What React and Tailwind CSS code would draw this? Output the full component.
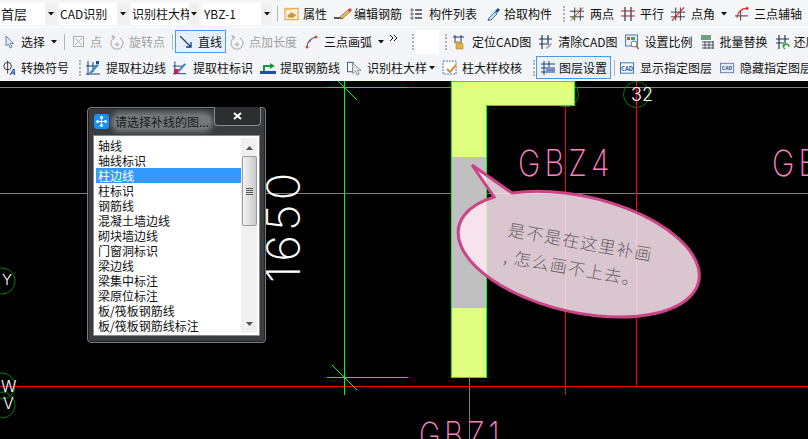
import React from "react";

const listItems = [
  "轴线", "轴线标识", "柱边线", "柱标识", "钢筋线", "混凝土墙边线", "砌块墙边线",
  "门窗洞标识", "梁边线", "梁集中标注", "梁原位标注", "板/筏板钢筋线", "板/筏板钢筋线标注",
];

function Tool({ icon, label, className = "", disabled }) {
  return (
    <div className={`flex items-center shrink-0 whitespace-nowrap ${disabled ? "text-[#a0a0a0]" : "text-[#111]"} ${className}`}>
      {icon}
      <span>{label}</span>
    </div>
  );
}

function Select({ label, textW, arrowW, className = "" }) {
  return (
    <div className={`flex h-[22px] shrink-0 ${className}`}>
      <div className={`${textW} bg-white overflow-hidden whitespace-nowrap leading-[22px] pl-[1px] text-[#111]`}>{label}</div>
      <div className={`${arrowW} bg-[#f0f0f0] flex items-center justify-center`}>
        <Caret />
      </div>
    </div>
  );
}

const Caret = ({ className = "" }) => (
  <svg viewBox="0 0 6 4" className={`w-[6px] h-[4px] shrink-0 ${className}`}><path d="M0 0h6L3 3.5z" fill="#111" /></svg>
);
const Sep = ({ className = "" }) => <div className={`w-px h-[16px] bg-[#b4b8bc] shrink-0 ${className}`} />;
const Grip = ({ className = "" }) => <div className={`w-[2px] h-[16px] border-l-2 border-dotted border-[#b0b0b0] shrink-0 ${className}`} />;

const Svg = ({ w, children }) => (
  <svg viewBox="0 0 16 16" className={`${w} h-[16px] shrink-0`}>{children}</svg>
);

export default function App() {
  return (
    <div className="w-[808px] h-[439px] overflow-hidden flex flex-col bg-black text-[12px] font-['Noto_Sans_CJK_SC',sans-serif]">
      <div className="h-[81px] shrink-0 bg-[#fafbfc] flex flex-col">
        {/* row 1 */}
        <div className="h-[27px] flex items-center bg-[#f5f6f7] overflow-hidden">
          <Select label="首层" textW="w-[45px]" arrowW="w-[12px]" className="text-[13px]" />
          <Select label="CAD识别" textW="w-[58px]" arrowW="w-[12px]" className="ml-[2px]" />
          <Select label="识别柱大样" textW="w-[58px]" arrowW="w-[10px]" className="ml-[2px]" />
          <Select label="YBZ-1" textW="w-[58px]" arrowW="w-[11px]" className="ml-[4px]" />
          <Sep className="ml-[5px]" />
          <Tool className="ml-[6px] gap-[4px]" label="属性" icon={
            <Svg w="w-[15px]"><rect x="1" y="2" width="14" height="12" fill="#fdf2dc" stroke="#e8962e" /><path d="M3 10l5-4 5 3-3 3H5z" fill="#c89a40" /><path d="M1 2h7v2H1z" fill="#f4c27a" /></Svg>
          } />
          <Tool className="ml-[7px] gap-[2px]" label="编辑钢筋" icon={
            <svg viewBox="0 0 18 16" className="w-[18px] h-[16px] shrink-0"><path d="M0 12h9" stroke="#222" strokeWidth="1.5" /><path d="M7 10l8-7 2 2-8 7-3 1z" fill="#e8b868" stroke="#8a5a20" strokeWidth=".7" /><path d="M14 4l2-2 2 2-2 2z" fill="#c84040" /></svg>
          } />
          <Tool className="ml-[8px] gap-[7px]" label="构件列表" icon={
            <svg viewBox="0 0 12 16" className="w-[12px] h-[16px] shrink-0"><path d="M1 3h2v2H1zM1 7h2v2H1zM1 11h2v2H1z" fill="none" stroke="#556" strokeWidth=".8" /><path d="M5 4h7M5 8h7M5 12h7" stroke="#445" strokeWidth="1.4" /></svg>
          } />
          <Tool className="ml-[10px] gap-[3px]" label="拾取构件" icon={
            <svg viewBox="0 0 14 16" className="w-[14px] h-[16px] shrink-0"><path d="M2 14l-1 1 1-3 6-6 2 2-6 6z" fill="#bfe0f4" stroke="#2a6aa8" strokeWidth=".9" /><path d="M8 5l3-3 2 2-3 3z" fill="#1d4f8c" /></svg>
          } />
          <Grip className="ml-[11px]" />
          <Tool className="ml-[5px] gap-[5px]" label="两点" icon={
            <Svg w="w-[15px]"><path d="M5 1v14M11 1v14M0 5h15M0 11h15" stroke="#334" /><path d="M1 15L14 1" stroke="#e02020" /><circle cx="4" cy="12" r="1.5" fill="#5a9a20" /></Svg>
          } />
          <Tool className="ml-[6px] gap-[4px]" label="平行" icon={
            <Svg w="w-[16px]"><path d="M5 1v14M11 1v14" stroke="#334" strokeWidth="1.2" /><path d="M1 5h14M1 10h14" stroke="#a02030" strokeWidth="1.2" /></Svg>
          } />
          <Tool className="ml-[7px] gap-[5px]" label="点角" icon={
            <Svg w="w-[15px]"><path d="M5 1v14M10 1v14M0 6h15M0 11h15" stroke="#334" /><path d="M1 15L14 1" stroke="#e02020" strokeWidth="1.2" /></Svg>
          } />
          <Caret className="ml-[6px]" />
          <Tool className="ml-[8px] gap-[4px]" label="三点辅轴" icon={
            <Svg w="w-[15px]"><path d="M6 5v10M0 10h14" stroke="#334" /><path d="M2 12C3 6 7 2 13 2" fill="none" stroke="#e02020" strokeWidth="1.2" /><circle cx="13" cy="2" r="1.4" fill="#e02020" /></Svg>
          } />
        </div>
        {/* row 2 */}
        <div className="h-[27px] mt-px flex items-center bg-[#f3f5f8] overflow-hidden">
          <Tool className="ml-[5px] gap-[7px]" label="选择" icon={
            <svg viewBox="0 0 9 14" className="w-[9px] h-[14px] shrink-0"><path d="M1 1v10l2.500-2L5 13l2-1-1.500-3.500H8.500z" fill="#dfe8f5" stroke="#5a7aa8" strokeWidth=".9" /></svg>
          } />
          <Caret className="ml-[6px]" />
          <Sep className="ml-[7px]" />
          <Tool disabled className="ml-[8px] gap-[6px]" label="点" icon={
            <svg viewBox="0 0 11 11" className="w-[11px] h-[11px] shrink-0"><rect x=".5" y=".5" width="10" height="10" fill="none" stroke="#b0b0b0" /><path d="M2 2l7 7M9 2L2 9" stroke="#b8b8b8" /></svg>
          } />
          <Tool disabled className="ml-[8px] gap-[5px]" label="旋转点" icon={
            <svg viewBox="0 0 14 16" className="w-[14px] h-[16px] shrink-0"><path d="M4 4a6 6 0 1 0 6 0M7 8v5M4.500 10.500h5" fill="none" stroke="#b5b5b5" strokeWidth="1.2" /><path d="M1 1l4 1-1 4z" fill="#b5b5b5" /></svg>
          } />
          <Sep className="ml-[7px]" />
          <div className="ml-[2px] w-[51px] h-[23px] shrink-0 border border-[#4a9ae8] bg-[#e6f0fa] flex items-center pl-[4px] gap-[6px] text-[#111]">
            <svg viewBox="0 0 12 12" className="w-[12px] h-[12px] shrink-0"><path d="M0 0l11 11M11 6v5H6" fill="none" stroke="#1d3f70" strokeWidth="1.3" /></svg>
            <span>直线</span>
          </div>
          <Tool disabled className="ml-[4px] gap-[5px]" label="点加长度" icon={
            <svg viewBox="0 0 14 16" className="w-[14px] h-[16px] shrink-0"><path d="M4 4a6 6 0 1 0 6 0M7 8v5M4.500 10.500h5" fill="none" stroke="#b5b5b5" strokeWidth="1.2" /><path d="M1 1l4 1-1 4z" fill="#b5b5b5" /></svg>
          } />
          <Tool className="ml-[8px] gap-[6px]" label="三点画弧" icon={
            <svg viewBox="0 0 13 14" className="w-[13px] h-[14px] shrink-0"><path d="M2 12C2 7 6 3 11 2" fill="none" stroke="#3a70b0" strokeWidth="1.2" /><circle cx="2" cy="12" r="1.500" fill="#d84a20" /><circle cx="11" cy="2" r="1.500" fill="#d84a20" /><circle cx="5" cy="6" r="1" fill="#d84a20" /></svg>
          } />
          <Caret className="ml-[6px]" />
          <svg viewBox="0 0 8 6" className="ml-[6px] w-[8px] h-[6px] shrink-0 -mt-[8px]"><path d="M0 0l3 3-3 3M4 0l3 3-3 3" fill="none" stroke="#111" /></svg>
          <Grip className="ml-[14px]" />
          <div className="ml-[2px] w-[23px] h-[24px] bg-white shrink-0" />
          <Grip className="ml-[6px]" />
          <Tool className="ml-[6px] gap-[6px]" label="定位CAD图" icon={
            <svg viewBox="0 0 13 16" className="w-[13px] h-[16px] shrink-0"><path d="M2 1v8M8 1v8M0 3h11" stroke="#223a70" /><path d="M3 15V8l1-1 1 3 1-3 1 3 1-2 2 2v5z" fill="#e8b040" stroke="#a07020" strokeWidth=".5" /></svg>
          } />
          <Tool className="ml-[8px] gap-[6px]" label="清除CAD图" icon={
            <svg viewBox="0 0 13 16" className="w-[13px] h-[16px] shrink-0"><path d="M3 1v14M9 1v10M0 5h13M0 10h8" stroke="#223a50" strokeWidth="1.2" /><path d="M7 14l5-5 1 1-5 5z" fill="#b080b0" /></svg>
          } />
          <Tool className="ml-[7px] gap-[6px]" label="设置比例" icon={
            <svg viewBox="0 0 14 16" className="w-[14px] h-[16px] shrink-0"><rect x=".5" y="1" width="12" height="11" fill="#e8f0fa" stroke="#4a7ab0" /><path d="M2 3h3v3H2z" fill="#d05040" /><path d="M6 3h4v3H6z" fill="#50a050" /><circle cx="9" cy="10" r="3" fill="#fff" stroke="#777" /><path d="M11 12l3 3" stroke="#a07020" strokeWidth="1.500" /></svg>
          } />
          <Tool className="ml-[7px] gap-[6px]" label="批量替换" icon={
            <svg viewBox="0 0 14 16" className="w-[14px] h-[16px] shrink-0"><rect x="1" y="1" width="10" height="5" fill="#70a080" /><path d="M2 8h12M2 11h12M2 14h12M5 7v8M9 7v8M13 7v8" stroke="#456" /></svg>
          } />
          <Tool className="ml-[8px] gap-[4px]" label="还原CAD图" icon={
            <svg viewBox="0 0 14 16" className="w-[14px] h-[16px] shrink-0"><path d="M3 1v14M9 1v8M0 5h13M0 9h8" stroke="#223a50" strokeWidth="1.2" /><path d="M7 13a3 3 0 0 1 6 0M7 13l2-2M7 13l2 2" fill="none" stroke="#30a030" strokeWidth="1.300" /></svg>
          } />
        </div>
        {/* row 3 */}
        <div className="h-[25px] flex items-center bg-[#f3f5f8] overflow-hidden">
          <Tool className="ml-[2px] gap-[4px]" label="转换符号" icon={
            <Svg w="w-[15px]"><ellipse cx="6" cy="6" rx="4" ry="4" fill="none" stroke="#333" /><path d="M6 0v14" stroke="#333" /><text x="8" y="15" fontSize="9" fontWeight="700" fontStyle="italic" fill="#1d4f9c">A</text></Svg>
          } />
          <Grip className="ml-[10px]" />
          <Tool className="ml-[5px] gap-[6px]" label="提取柱边线" icon={
            <svg viewBox="0 0 14 16" className="w-[14px] h-[16px] shrink-0"><path d="M2 1v14M0 14h14M0 6h10M7 2v10" stroke="#1d3f80" /><path d="M3 13L11 4l2 1-8 9z" fill="#3a8ac0" /><path d="M10 1h3v3h-3z" fill="#1d4f7c" /></svg>
          } />
          <Tool className="ml-[7px] gap-[5px]" label="提取柱标识" icon={
            <Svg w="w-[15px]"><path d="M2 1v14M0 14h14M0 6h10" stroke="#1d3f80" /><rect x="1" y="9" width="5" height="5" fill="#d02050" /><path d="M5 11l7-8 2 1-7 8z" fill="#3a8ac0" /></Svg>
          } />
          <Tool className="ml-[7px] gap-[4px]" label="提取钢筋线" icon={
            <Svg w="w-[16px]"><path d="M0 11h16v3H0z" fill="#1d4fa8" /><path d="M4 11V6h7" fill="none" stroke="#1a9a40" strokeWidth="2" /><path d="M10 3l5 3-5 3z" fill="#1a9a40" /></Svg>
          } />
          <Tool className="ml-[7px] gap-[5px]" label="识别柱大样" icon={
            <Svg w="w-[15px]"><rect x=".5" y="2" width="6" height="10" fill="#fff" stroke="#2a5aa0" /><path d="M6 3v11l3-2.500 2 4 2-1-2-4h4z" fill="#e8e8e8" stroke="#777" strokeWidth=".8" /></Svg>
          } />
          <Caret className="ml-[2px]" />
          <Tool className="ml-[7px] gap-[4px]" label="柱大样校核" icon={
            <Svg w="w-[16px]"><rect x="1" y="1" width="13" height="13" fill="#fff" stroke="#3a7ac0" strokeDasharray="2 1" /><path d="M5 9l3 3 6-7" fill="none" stroke="#d89030" strokeWidth="2" /></Svg>
          } />
          <Grip className="ml-[11px]" />
          <div className="ml-px w-[75px] h-[23px] shrink-0 border border-[#4a9ae8] bg-[#eaf3fc] flex items-center pl-[4px] gap-[4px] text-[#111]">
            <svg viewBox="0 0 14 16" className="w-[14px] h-[16px] shrink-0"><path d="M3 1v14M8 1v6M0 4h14M0 8h14M0 12h14" stroke="#223a70" /><path d="M5 10h9" stroke="#2a6ad0" strokeWidth="1.500" /></svg>
            <span>图层设置</span>
          </div>
          <Sep className="ml-[3px]" />
          <Tool className="ml-[5px] gap-[5px]" label="显示指定图层" icon={
            <Svg w="w-[15px]"><rect x=".5" y="2.500" width="14" height="11" fill="#fff" stroke="#2a6ab0" /><text x="7.500" y="11" textAnchor="middle" fontSize="6.500" fontWeight="700" fill="#1d5aa8">CAD</text></Svg>
          } />
          <Tool className="ml-[8px] gap-[5px]" label="隐藏指定图层" icon={
            <Svg w="w-[15px]"><rect x=".5" y="3" width="14" height="10" fill="#e4ecf6" stroke="#5a80b0" /><text x="7.500" y="10.500" textAnchor="middle" fontSize="5.500" fontWeight="700" fill="#3a5a88">CAD</text></Svg>
          } />
        </div>
      </div>

      {/* CAD canvas */}
      <div className="relative flex-1 bg-black overflow-hidden">
        <svg viewBox="0 81 808 358" className="absolute inset-0 w-[808px] h-[358px]" shapeRendering="crispEdges">
          <path d="M0 87.500H808M0 193.500H808M469.500 377V439" stroke="#808080" />
          <g fill="none" stroke="#008000" shapeRendering="auto">
            <circle cx="636.500" cy="94.500" r="13" />
            <circle cx="565.500" cy="94" r="13" />
            <circle cx="2" cy="281" r="13" />
            <circle cx="2" cy="386" r="13" />
            <circle cx="2" cy="405" r="13" />
          </g>
          <path d="M565.500 105V395M636.500 81V386" stroke="#ff0000" />
          <path d="M0 386.500H808" stroke="#ff0000" />
          <path d="M344.500 81V395M327 87.500H408M327 377.500H408" stroke="#00ff00" />
          <path d="M338 81L357 100M332 365L357 390" stroke="#00ff00" shapeRendering="auto" />
          <path d="M451.500 81H574.500V105.500H486.500V377.500H451.500Z" fill="#dfff80" stroke="#00ff00" />
          <rect x="452" y="157" width="34" height="151" fill="#c0c0c0" />
        </svg>

        <div className="absolute left-[518px] top-[60px] origin-left scale-x-[.84] text-[#ff80c0] font-['Inter',sans-serif] font-extralight text-[36px] leading-[44px] tracking-[5px]">GBZ4</div>
        <div className="absolute left-[772px] top-[60px] origin-left scale-x-[.84] text-[#ff80c0] font-['Inter',sans-serif] font-extralight text-[36px] leading-[44px] tracking-[5px]">GB</div>
        <div className="absolute left-[419px] top-[332px] origin-left scale-x-[.8] text-[#ff80c0] font-['Inter',sans-serif] font-extralight text-[36px] leading-[44px] tracking-[5px]">GBZ1</div>
        <div className="absolute left-[631px] top-[4px] text-white font-['Inter',sans-serif] font-light text-[18px] leading-[20px]">32</div>
        <div className="absolute left-[2px] top-[189px] text-white font-['Inter',sans-serif] font-light text-[15px] leading-[20px]">Y</div>
        <div className="absolute left-[1px] top-[295px] text-white font-['Inter',sans-serif] font-light text-[16px] leading-[20px]">W</div>
        <div className="absolute left-[3px] top-[312px] text-white font-['Inter',sans-serif] font-light text-[16px] leading-[20px]">V</div>
        <div className="absolute left-[222px] top-[123px] w-[122px] h-[44px] -rotate-90 text-center text-white font-['Inter',sans-serif] font-extralight text-[46px] leading-[44px] tracking-[4px]">1650</div>

        {/* speech bubble */}
        <svg viewBox="0 81 808 358" className="absolute inset-0 w-[808px] h-[358px]">
          <path d="M472 165L512 193A123 58 13 1 1 494 197Z" fill="#ffe9f3" fillOpacity=".85" stroke="#cc4488" strokeWidth="3" />
        </svg>
        <div className="absolute left-[511px] top-[134px] rotate-[10deg] origin-top-left text-[#6a5f66] font-light text-[17px] leading-[27px] whitespace-nowrap tracking-[1.3px]">
          <div>是不是在这里补画</div>
          <div>, 怎么画不上去。</div>
        </div>

        {/* layer picker dialog */}
        <div className="absolute left-[87px] top-[26px] w-[179px] h-[236px] rounded-[4px] border border-[#7a7a7a] bg-[#3a3d40] flex flex-col px-[5px] pb-[6px] shadow-[inset_0_0_0_1px_#222]">
          <div className="relative h-[27px] shrink-0 flex items-center">
            <div className="w-[15px] h-[15px] ml-[1px] rounded-[3px] bg-[#1a90f0] flex items-center justify-center shrink-0">
              <svg viewBox="0 0 11 11" className="w-[11px] h-[11px]"><path d="M5.500 0v11M0 5.500h11M5.500 0L4 2h3zM5.500 11L4 9h3zM0 5.500L2 4v3zM11 5.500L9 4v3z" stroke="#fff" fill="#fff" /></svg>
            </div>
            <div className="ml-[5px] px-[1px] h-[14px] leading-[14px] rounded-[6px] bg-[#74777a] shadow-[0_0_5px_3px_#74777a] text-[#1a1a1a] whitespace-nowrap">请选择补线的图...</div>
            <div className="absolute right-[-1px] top-[-1px] w-[47px] h-[19px] border border-[#8a8a8a] border-t-0 rounded-b-[4px] bg-[#2c2e30] flex items-center justify-center">
              <svg viewBox="0 0 9 8" className="w-[9px] h-[8px]"><path d="M1 1l7 6M8 1L1 7" stroke="#fff" strokeWidth="2" /></svg>
            </div>
          </div>
          <div className="flex-1 flex border border-[#888] bg-white p-[2px] overflow-hidden">
            <div className="flex-1 min-w-0 flex flex-col">
              {listItems.map((item, i) => (
                <div key={item} className={`h-[15px] leading-[15px] pl-[2px] shrink-0 whitespace-nowrap ${i === 2 ? "bg-[#3399ff] text-white" : "text-[#111]"}`}>
                  {item}
                </div>
              ))}
            </div>
            <div className="w-[16px] shrink-0 bg-[#f0f0f0] flex flex-col items-center">
              <svg viewBox="0 0 7 4" className="w-[7px] h-[4px] mt-[8px]"><path d="M3.500 0L7 4H0z" fill="#555" /></svg>
              <div className="mt-[6px] w-[15px] h-[70px] rounded-[2px] border border-[#999] bg-gradient-to-r from-[#f4f4f4] to-[#c8c8c8] flex flex-col items-center justify-center gap-px">
                <div className="w-[7px] h-px bg-[#555]" />
                <div className="w-[7px] h-px bg-[#555]" />
                <div className="w-[7px] h-px bg-[#555]" />
                <div className="w-[7px] h-px bg-[#555]" />
              </div>
              <svg viewBox="0 0 7 4" className="w-[7px] h-[4px] mt-auto mb-[7px]"><path d="M3.500 4L7 0H0z" fill="#555" /></svg>
            </div>
          </div>
        </div>
      </div>
    </div>
  );
}
